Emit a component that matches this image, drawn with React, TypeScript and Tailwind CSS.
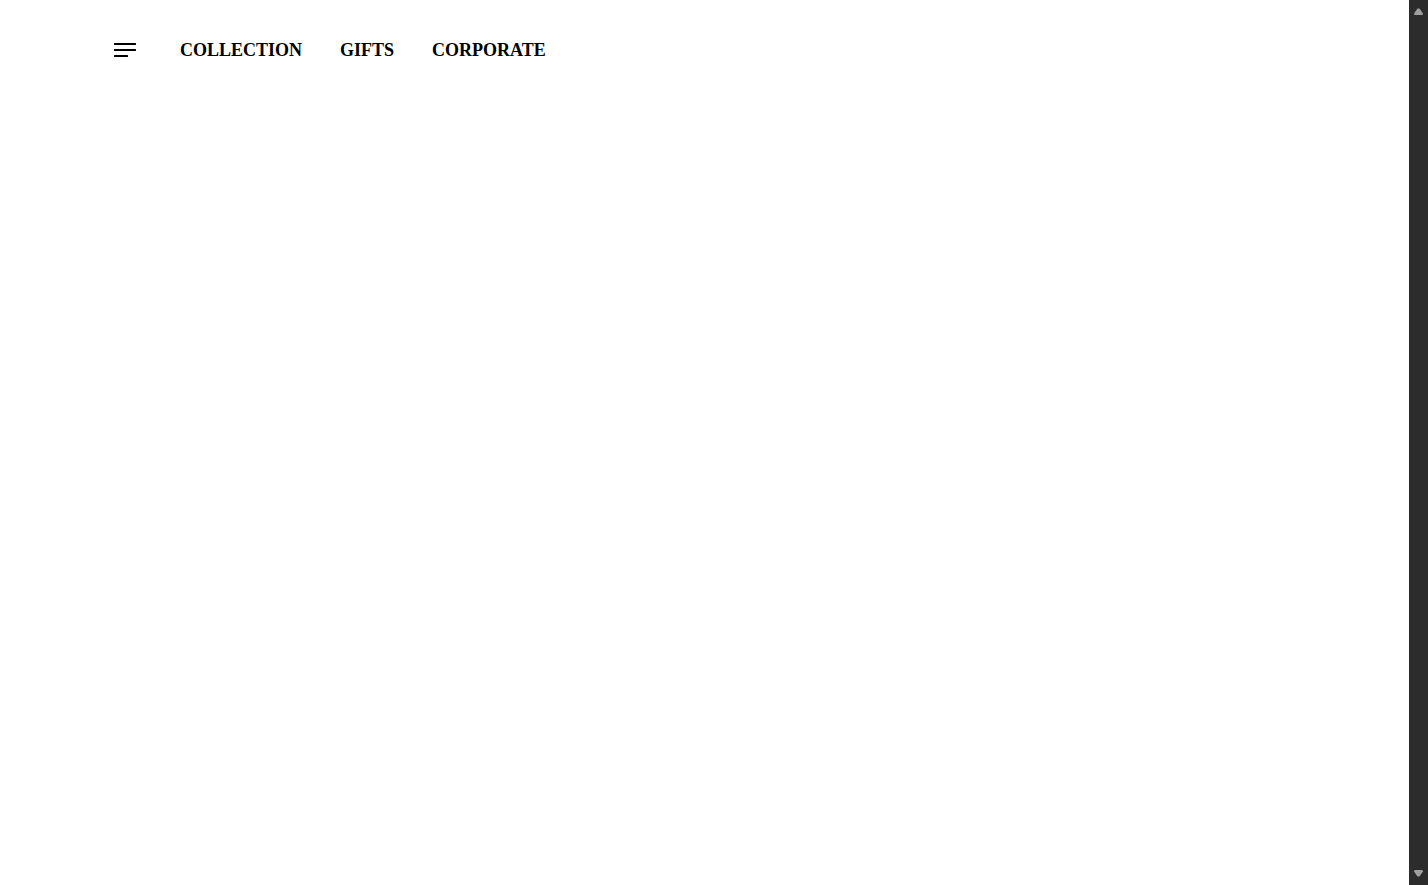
const links = ['Collection', 'Gifts', 'Corporate']

function MenuIcon() {
  return (
    <svg width="22" height="14" viewBox="0 0 22 14" fill="black">
      <rect x="0" y="0" width="22" height="2" rx="0.5" />
      <rect x="0" y="6" width="22" height="2" rx="0.5" />
      <rect x="0" y="12" width="14" height="2" rx="0.5" />
    </svg>
  )
}

function Navbar() {
  return (
    <nav className="flex items-center gap-11 py-9">
      <button type="button" aria-label="Menu" className="cursor-pointer">
        <MenuIcon />
      </button>
      <ul className="flex items-center gap-[38px]">
        {links.map((link) => (
          <li key={link}>
            <a
              href={`#${link.toLowerCase()}`}
              className="block text-lg font-bold uppercase text-black"
            >
              {link}
            </a>
          </li>
        ))}
      </ul>
    </nav>
  )
}

function ScrollTrack() {
  return (
    <div className="flex w-[19px] shrink-0 flex-col items-center justify-between bg-[#2c2c2c] py-2">
      <button type="button" aria-label="Scroll up">
        <svg width="9" height="7" viewBox="0 0 9 7" className="block" fill="#9f9f9f">
          <path d="M3.5 0.5h2L9 5.5Q9 7 8 7H1Q0 7 0 5.5z" />
        </svg>
      </button>
      <button type="button" aria-label="Scroll down">
        <svg width="9" height="7" viewBox="0 0 9 7" className="block" fill="#9f9f9f">
          <path d="M3.5 6.5h2L9 1.5Q9 0 8 0H1Q0 0 0 1.5z" />
        </svg>
      </button>
    </div>
  )
}

export default function App() {
  return (
    <div className="flex min-h-screen bg-white font-['Liberation_Serif',serif]">
      <main className="flex-1 px-[114px]">
        <Navbar />
      </main>
      <ScrollTrack />
    </div>
  )
}
